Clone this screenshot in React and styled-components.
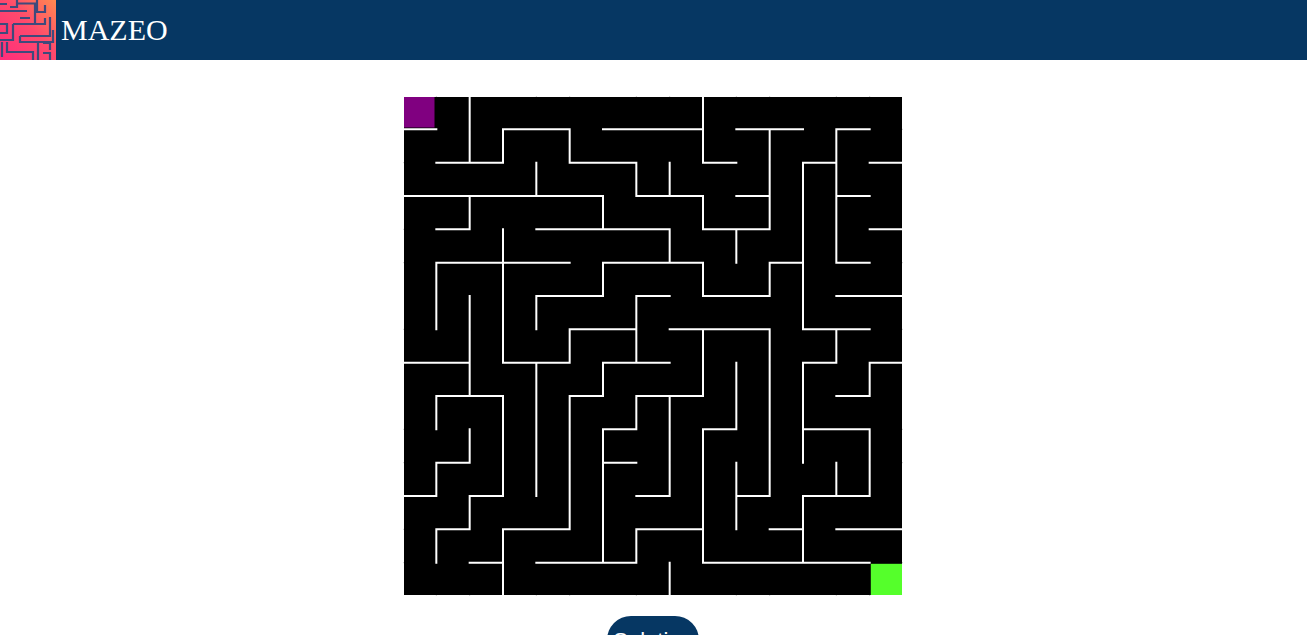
import styled, { createGlobalStyle } from 'styled-components'

const GlobalStyle = createGlobalStyle`
  html, body {
    margin: 0;
    padding: 0;
    overflow: hidden;
    background: #fff;
    font-family: "Liberation Serif", serif;
  }
`

const Header = styled.header`
  display: flex;
  align-items: center;
  gap: 5px;
  height: 60px;
  background-color: #063763;
`

const Logo = styled.svg`
  display: block;
  width: 56px;
  height: 60px;
  flex: none;
`

const Title = styled.h1`
  margin: 0;
  color: #fff;
  font-family: "Liberation Serif", serif;
  font-size: 30px;
  font-weight: 400;
`

const Main = styled.main`
  display: flex;
  flex-direction: column;
  align-items: center;
  padding-top: 36px;
`

const MazeBoard = styled.svg`
  display: block;
  width: 500px;
  height: 500px;
  margin-right: 1px;
`

const SolutionButton = styled.button`
  margin-top: 20px;
  margin-right: 1px;
  padding: 12px 6px;
  border: 0;
  border-radius: 24px;
  background-color: #063763;
  color: #fff;
  font-family: "Liberation Sans", sans-serif;
  font-size: 22px;
`

const CELL = 500 / 15

// wall lists: index is the grid line, values are the column / row it covers
const horizontalWalls = {
  1: [0, 3, 4, 6, 7, 8, 10, 11, 13],
  2: [1, 2, 5, 6, 9, 12, 14],
  3: [0, 1, 2, 3, 4, 5, 7, 8, 10, 13],
  4: [1, 4, 5, 6, 7, 9, 10, 14],
  5: [1, 2, 3, 4, 6, 7, 8, 11, 13],
  6: [4, 5, 7, 9, 10, 13, 14],
  7: [5, 6, 8, 9, 10, 12, 13],
  8: [0, 1, 3, 4, 6, 7, 12, 14],
  9: [1, 2, 5, 7, 8, 13],
  10: [6, 9, 12, 13],
  11: [1, 6],
  12: [0, 2, 7, 10, 12, 13],
  13: [1, 3, 4, 7, 8, 11, 13, 14],
  14: [2, 4, 5, 6, 9, 10, 11, 12, 13],
}

const verticalWalls = {
  1: [5, 6, 9, 11, 13],
  2: [0, 1, 3, 6, 7, 8, 10, 12],
  3: [1, 4, 5, 6, 7, 9, 10, 11, 13, 14],
  4: [2, 6, 8, 9, 10, 11],
  5: [1, 7, 9, 10, 11, 12],
  6: [3, 5, 8, 10, 11, 12, 13],
  7: [2, 6, 7, 9, 13],
  8: [2, 4, 9, 10, 11, 14],
  9: [0, 1, 3, 5, 7, 8, 10, 11, 12, 13],
  10: [4, 8, 9, 11, 12],
  11: [1, 2, 3, 5, 7, 8, 9, 10, 11],
  12: [2, 3, 4, 5, 6, 8, 9, 10, 12, 13],
  13: [1, 2, 3, 4, 7, 11],
  14: [8, 10, 11],
}

const at = (i) => (i * CELL).toFixed(2)

const wallPath = () => {
  let d = ''
  Object.entries(horizontalWalls).forEach(([line, cols]) => {
    cols.forEach((c) => {
      d += `M${at(c)} ${at(line)}H${at(c + 1)}`
    })
  })
  Object.entries(verticalWalls).forEach(([line, rows]) => {
    rows.forEach((r) => {
      d += `M${at(line)} ${at(r)}V${at(r + 1)}`
    })
  })
  return d
}

// the little grey marks that stick out past the black square
const tickPath = () => {
  let d = ''
  ;[1, 4, 5, 7, 8, 10, 11, 13, 14].forEach((i) => {
    d += `M${at(i)} 0V1`
  })
  ;[1, 2, 4, 5, 7, 10, 11, 13, 14].forEach((i) => {
    d += `M${at(i)} 499V500`
  })
  ;[2, 4, 5, 7, 10, 11, 13, 14].forEach((j) => {
    d += `M0 ${at(j)}H1`
  })
  ;[1, 5, 7, 10, 11, 14].forEach((j) => {
    d += `M499 ${at(j)}H500`
  })
  return d
}

const Maze = () => (
  <MazeBoard viewBox="0 0 500 500">
    <rect x="1" y="1" width="498" height="498" fill="#000" />
    <path d={tickPath()} stroke="#ccc" strokeWidth="1" fill="none" />
    <path d={wallPath()} stroke="#fff" strokeWidth="2" strokeLinecap="square" fill="none" />
    <rect x="1" y="1" width="30.5" height="30.5" fill="#800080" />
    <rect x="467.8" y="467.8" width="31.2" height="31.2" fill="#55ff2b" />
  </MazeBoard>
)

const MazeLogo = () => (
  <Logo viewBox="0 0 56 60">
    <defs>
      <linearGradient id="logoFill" x1="0" y1="1" x2="1" y2="0">
        <stop offset="0" stopColor="#ff2d7c" />
        <stop offset="0.55" stopColor="#ff4a6c" />
        <stop offset="1" stopColor="#ff8a50" />
      </linearGradient>
    </defs>
    <rect width="56" height="60" fill="url(#logoFill)" />
    <path
      d="M0 4H7M10 7H17V0M0 11H27M17 3.5H35V23M37 0V12H45V5M13 24H45V18M13 24V40H0M0 24H7V33H0M20 18H30M20 36H50V17M20 36V42H53V30M2 42V57M7 42V52H33V60M38 43V60M43 43H50V50M43 53H50V60"
      stroke="#3f4a7c"
      strokeWidth="2.2"
      fill="none"
    />
  </Logo>
)

export default function App() {
  return (
    <>
      <GlobalStyle />
      <Header>
        <MazeLogo />
        <Title>MAZEO</Title>
      </Header>
      <Main>
        <Maze />
        <SolutionButton>Solution</SolutionButton>
      </Main>
    </>
  )
}
